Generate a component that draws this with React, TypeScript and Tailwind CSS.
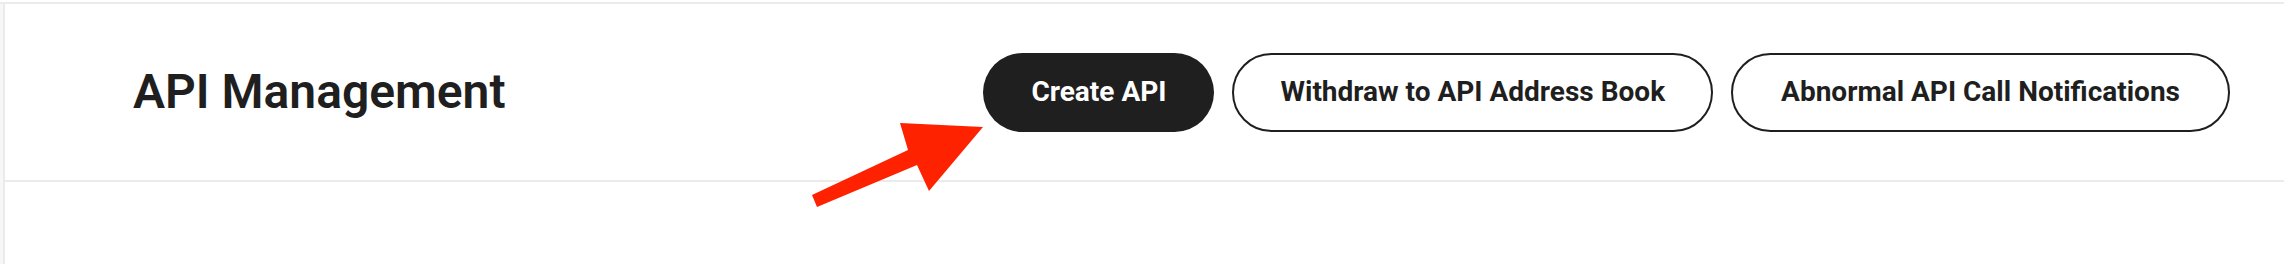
import * as React from "react"

function Arrow() {
  // red annotation arrow pointing at the Create API button
  return (
    <svg
      className="pointer-events-none absolute left-[800px] top-[115px]"
      width="200"
      height="100"
      viewBox="0 0 200 100"
    >
      <polygon
        points="12,80 108,35 100,8 183,12 129,76 117,50 17,92"
        fill="#ff2200"
      />
    </svg>
  )
}

export default function App() {
  const font = { fontFamily: "Roboto, 'Noto Sans', sans-serif" }

  return (
    <div className="relative h-[264px] w-[2284px] bg-white pt-[2px]" style={font}>
      <div className="flex h-[262px] border-t-2 border-[#ebebeb]">
        <div className="w-[3px] bg-[#f7f7f7]" />
        <div className="flex-1 border-l-2 border-[#ebebeb]">
          <div className="flex h-[178px] items-center justify-between border-b-2 border-[#ebebeb] pl-[128px] pr-[54px]">
            <h1 className="text-[48px] font-semibold leading-none text-[#1f1f1f]">API Management</h1>
            <div className="flex items-center gap-[18px]">
              <button className="flex h-[79px] items-center rounded-full bg-[#1f1f1f] px-[48px] text-[28px] font-bold text-white">
                Create API
              </button>
              <button className="flex h-[79px] items-center rounded-full border-2 border-[#1f1f1f] bg-white px-[46px] text-[28px] font-bold text-[#1f1f1f]">
                Withdraw to API Address Book
              </button>
              <button className="flex h-[79px] items-center rounded-full border-2 border-[#1f1f1f] bg-white px-[48px] text-[28px] font-bold text-[#1f1f1f]">
                Abnormal API Call Notifications
              </button>
            </div>
          </div>
        </div>
      </div>
      <Arrow />
    </div>
  )
}
